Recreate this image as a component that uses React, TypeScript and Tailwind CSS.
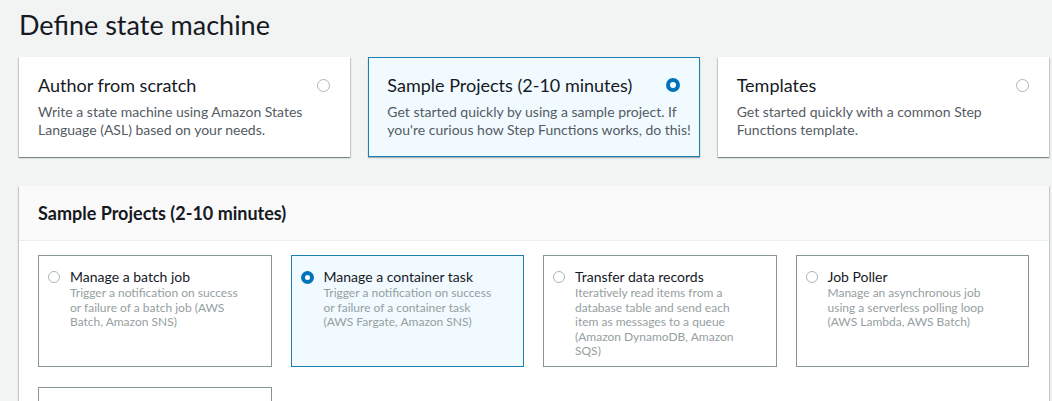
const font = { fontFamily: 'Lato, "Noto Sans", Arial, sans-serif' };

type Option = { title: string; desc: string; selected?: boolean };

const topOptions: Option[] = [
  {
    title: "Author from scratch",
    desc: "Write a state machine using Amazon States Language (ASL) based on your needs.",
  },
  {
    title: "Sample Projects (2-10 minutes)",
    desc: "Get started quickly by using a sample project. If you're curious how Step Functions works, do this!",
    selected: true,
  },
  {
    title: "Templates",
    desc: "Get started quickly with a common Step Functions template.",
  },
];

const projects: Option[] = [
  {
    title: "Manage a batch job",
    desc: "Trigger a notification on success or failure of a batch job (AWS Batch, Amazon SNS)",
  },
  {
    title: "Manage a container task",
    desc: "Trigger a notification on success or failure of a container task (AWS Fargate, Amazon SNS)",
    selected: true,
  },
  {
    title: "Transfer data records",
    desc: "Iteratively read items from a database table and send each item as messages to a queue (Amazon DynamoDB, Amazon SQS)",
  },
  {
    title: "Job Poller",
    desc: "Manage an asynchronous job using a serverless polling loop (AWS Lambda, AWS Batch)",
  },
  { title: "", desc: "" },
];

function Radio({ checked, size = 13 }: { checked?: boolean; size?: number }) {
  if (checked) {
    return (
      <span
        className="block shrink-0 rounded-full border-[4px] border-[#0073bb] bg-white"
        style={{ width: size + 1, height: size + 1 }}
      />
    );
  }
  return (
    <span
      className="block shrink-0 rounded-full border border-[#aab7b8] bg-white"
      style={{ width: size, height: size }}
    />
  );
}

export default function App() {
  return (
    <div className="h-[401px] w-[1052px] overflow-hidden bg-[#f2f3f3] pl-[19px] pr-[3px] text-[#16191f]" style={font}>
      <h1 className="pt-[7px] text-[27px] leading-[36px] font-normal">Define state machine</h1>

      {/* Creation method tiles */}
      <div className="mt-[14px] grid grid-cols-3 gap-[18px]">
        {topOptions.map((o) => (
          <div
            key={o.title}
            className={
              "h-[100px] border pl-[18px] pr-[4px] pt-[15px] " +
              (o.selected
                ? "border-[#1b7fb0] bg-[#f1faff] shadow-[0_1px_1px_0_rgba(0,28,36,0.3)]"
                : "border-transparent bg-white shadow-[0_1px_1px_0_rgba(0,28,36,0.3),1px_1px_1px_0_rgba(0,28,36,0.15),-1px_1px_1px_0_rgba(0,28,36,0.15)]")
            }
          >
            <div className="flex items-center justify-between pr-[15px]">
              <span className="text-[18px] leading-[24px]">{o.title}</span>
              <Radio checked={o.selected} />
            </div>
            <p className="mt-[6px] text-[14px] leading-[18px] text-[#545b64]">{o.desc}</p>
          </div>
        ))}
      </div>

      {/* Sample projects panel */}
      <div className="mt-[29px] bg-white shadow-[0_1px_1px_0_rgba(0,28,36,0.3),1px_1px_1px_0_rgba(0,28,36,0.15),-1px_1px_1px_0_rgba(0,28,36,0.15)]">
        <div className="flex h-[55px] items-center border-b border-[#eaeded] bg-[#fafafa] px-[19px]">
          <h2 className="text-[18px] font-bold">Sample Projects (2-10 minutes)</h2>
        </div>
        <div className="grid grid-cols-4 gap-x-[19px] gap-y-[20px] pl-[19px] pr-[20px] pt-[14px] pb-[20px]">
          {projects.map((p, i) => (
            <div
              key={i}
              className={
                "flex h-[112px] gap-[10px] pl-[9px] pr-[22px] pt-[11px] " +
                (p.selected ? "border border-[#1b7fb0] bg-[#f1faff]" : "border border-[#879596] bg-white")
              }
            >
              {p.title && (
                <>
                  <div className="pt-[4px]">
                    <Radio checked={p.selected} size={12} />
                  </div>
                  <div>
                    <div className="text-[14px] leading-[19px]">{p.title}</div>
                    <p className="text-[12px] leading-[14.5px] text-[#95a0a1]">{p.desc}</p>
                  </div>
                </>
              )}
            </div>
          ))}
        </div>
      </div>
    </div>
  );
}
